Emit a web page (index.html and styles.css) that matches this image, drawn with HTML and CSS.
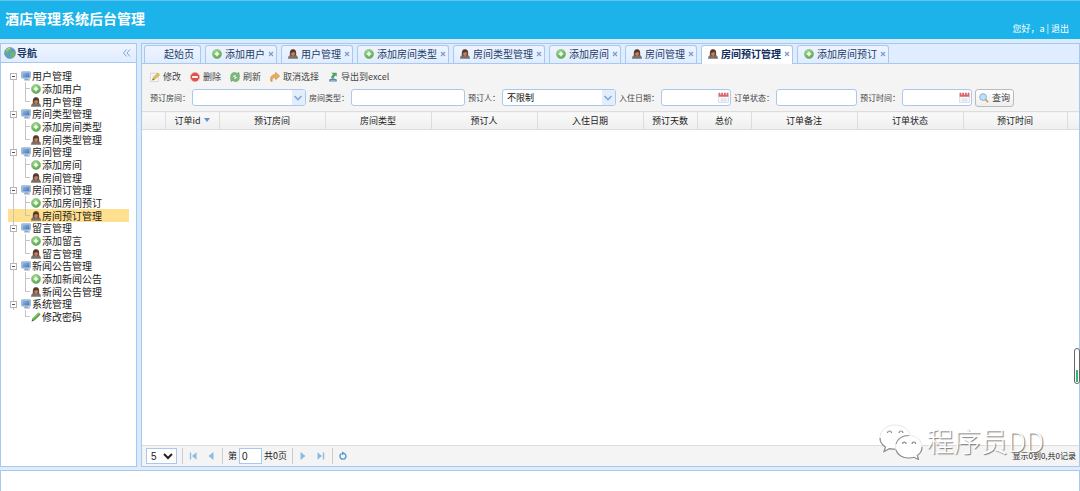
FILE: index.html
```html
<!DOCTYPE html>
<html lang="zh-CN">
<head>
<meta charset="utf-8">
<title>酒店管理系统后台管理</title>
<link rel="stylesheet" href="styles.css">
</head>
<body>
<svg width="0" height="0" class="sprite" aria-hidden="true">
  <defs>
    <radialGradient id="g-green" cx=".4" cy=".3" r=".8"><stop offset="0" stop-color="#a5dc92"/><stop offset="1" stop-color="#4da041"/></radialGradient>
    <linearGradient id="g-blue" x1="0" y1="0" x2="1" y2="1"><stop offset="0" stop-color="#93b9e6"/><stop offset="1" stop-color="#3f76bd"/></linearGradient>
    <symbol id="i-add" viewBox="0 0 16 16"><circle cx="8" cy="8" r="7.400" fill="url(#g-green)" stroke="#7db873" stroke-width=".8"/><path d="M8 4.500v7M4.500 8h7" stroke="#fff" stroke-width="2.200"/></symbol>
    <symbol id="i-user" viewBox="0 0 16 16"><path d="M0 15.500c0-4 2-5.500 4.500-6h7c2.500.5 4.500 2 4.500 6z" fill="#70746c"/><path d="M5.500 10h5L8 14z" fill="#c9584a"/><path d="M3 9C2.500 3 4 .5 8 .5s5.500 2.500 5 8.500L11 11H5z" fill="#674331"/><ellipse cx="8" cy="7.500" rx="3" ry="3.700" fill="#b98261"/><path d="M4.500 6c2 0 4-.8 5-2l2 2V3L8 1 5 3z" fill="#553526"/></symbol>
    <symbol id="i-pc" viewBox="0 0 16 16"><rect x=".8" y="1" width="14.400" height="10.500" rx="1" fill="#b2c6df" stroke="#84a3c8"/><rect x="2.500" y="2.500" width="11" height="7.500" fill="url(#g-blue)"/><path d="M6 11.500h5V13h3v2H5v-2h1z" fill="#93a9c5"/></symbol>
    <symbol id="i-pen" viewBox="0 0 16 16"><path d="M1 15l1.500-5L12 .5l3.500 3.500L6 13z" fill="#58a744"/><path d="M3 11L12.500 2" stroke="#a0d68d" stroke-width="1.500"/><path d="M1 15l1-3 2 2z" fill="#444"/></symbol>
    <symbol id="i-edit" viewBox="0 0 16 16"><path d="M1 2h12v13H1z" fill="#fff" stroke="#b3bdcd"/><path d="M3 5h6M3 8h4" stroke="#cbd4e0"/><path d="M4 13l1-4 7.500-7.500 3 3L8 12z" fill="#e7bb53" stroke="#c4903b" stroke-width=".7"/><path d="M4 13l.7-2.500L6.500 12z" fill="#554"/></symbol>
    <symbol id="i-del" viewBox="0 0 16 16"><circle cx="8" cy="8" r="7.200" fill="#de5048" stroke="#e99b90"/><path d="M3.500 8h9" stroke="#fff" stroke-width="3"/></symbol>
    <symbol id="i-reload" viewBox="0 0 16 16"><path d="M1 7c0-6 7-8 10.500-4.500L14 .5l1.500 7-7-.3L10.500 5C8 3.500 5 5 4.500 7.500zM15 9c0 6-7 8-10.500 4.500L2 15.500.5 8.500l7 .3L5.500 11c2.500 1.500 5.500 0 6-2.500z" fill="#79be79" stroke="#469050" stroke-width=".7"/></symbol>
    <symbol id="i-redo" viewBox="0 0 16 16"><path d="M1.500 15C-.5 8 3 4 9 4V.5l6.500 6L9 12.500V9C5 8.500 3 10 3.500 15z" fill="#f0ad57" stroke="#b97832" stroke-width=".8"/></symbol>
    <symbol id="i-export" viewBox="0 0 16 16"><path d="M5 1h9v6l-2.500-1.500L8 11 4.500 8.500 8 3.500z" fill="#4ba66a"/><path d="M2 12c4-2 8-2 12 0v3H2z" fill="#5686a5"/><path d="M4 13.500h8" stroke="#b9d2df"/></symbol>
    <symbol id="i-globe" viewBox="0 0 16 16"><circle cx="8" cy="8" r="7.400" fill="#5c9bd1" stroke="#678fae" stroke-width=".7"/><path d="M2 4c3-4 7-3 8-2l-1 3-3 1-1 3-3-1zM8 8l5-2 2 3-3 5-4 1 1-3z" fill="#72b85c"/><path d="M3 5c1-2 3-3 5-3" fill="none" stroke="#d2ecd0"/></symbol>
    <symbol id="i-find" viewBox="0 0 16 16"><path d="M9.500 9.500l5 5" stroke="#d89b57" stroke-width="3"/><circle cx="6.500" cy="6.500" r="5.400" fill="#bfe0fa" stroke="#8eb2d7" stroke-width="1.600"/></symbol>
    <symbol id="i-cal" viewBox="0 0 16 16"><path d="M1 2h14v13H1z" fill="#fff" stroke="#bcc9dc"/><path d="M1 1h14v6H1z" fill="#dc646a"/><path d="M4 0v4M8 0v4M12 0v4" stroke="#fff" stroke-width="1.300"/><path d="M3 10h10M3 12.500h10M6 8v6M10 8v6" stroke="#d1dbea"/></symbol>
    <symbol id="i-down" viewBox="0 0 10 10"><path d="M1.500 3l3.500 3.500L8.500 3" fill="none" stroke="#80a9db" stroke-width="1.600"/></symbol>
    <symbol id="i-x" viewBox="0 0 6 6"><path d="M1 1l4 4M5 1L1 5" stroke="#7f9cc6" stroke-width="1.200"/></symbol>
    <symbol id="i-prev" viewBox="0 0 8 8"><path d="M6.500 0v8L1.500 4z" fill="#8bbbe0"/></symbol>
    <symbol id="i-first" viewBox="0 0 8 8"><path d="M1.500.5v7" stroke="#8bbbe0" stroke-width="1.400"/><path d="M7.500.3v7.400L3 4z" fill="#8bbbe0"/></symbol>
  </defs>
</svg>

<header class="banner">
  <h1 class="banner-title">酒店管理系统后台管理</h1>
  <div class="banner-user">您好，a | <a href="#">退出</a></div>
</header>

<div class="workspace">
  <aside class="nav-panel">
    <div class="nav-head"><svg class="globe"><use href="#i-globe"/></svg><h2>导航</h2><button class="collapse" aria-label="收起"><svg viewBox="0 0 8 8"><path d="M4 .5L1 4l3 3.500M7.500.5l-3 3.500 3 3.500" fill="none" stroke="#7da5dd"/></svg></button></div>
    <ul class="tree">
      <li><a class="branch" href="#"><i class="toggle"></i><svg><use href="#i-pc"/></svg>用户管理</a>
        <ul><li><a class="leaf" href="#"><svg><use href="#i-add"/></svg>添加用户</a></li><li><a class="leaf" href="#"><svg><use href="#i-user"/></svg>用户管理</a></li></ul></li>
      <li><a class="branch" href="#"><i class="toggle"></i><svg><use href="#i-pc"/></svg>房间类型管理</a>
        <ul><li><a class="leaf" href="#"><svg><use href="#i-add"/></svg>添加房间类型</a></li><li><a class="leaf" href="#"><svg><use href="#i-user"/></svg>房间类型管理</a></li></ul></li>
      <li><a class="branch" href="#"><i class="toggle"></i><svg><use href="#i-pc"/></svg>房间管理</a>
        <ul><li><a class="leaf" href="#"><svg><use href="#i-add"/></svg>添加房间</a></li><li><a class="leaf" href="#"><svg><use href="#i-user"/></svg>房间管理</a></li></ul></li>
      <li><a class="branch" href="#"><i class="toggle"></i><svg><use href="#i-pc"/></svg>房间预订管理</a>
        <ul><li><a class="leaf" href="#"><svg><use href="#i-add"/></svg>添加房间预订</a></li><li><a class="leaf selected" href="#"><svg><use href="#i-user"/></svg>房间预订管理</a></li></ul></li>
      <li><a class="branch" href="#"><i class="toggle"></i><svg><use href="#i-pc"/></svg>留言管理</a>
        <ul><li><a class="leaf" href="#"><svg><use href="#i-add"/></svg>添加留言</a></li><li><a class="leaf" href="#"><svg><use href="#i-user"/></svg>留言管理</a></li></ul></li>
      <li><a class="branch" href="#"><i class="toggle"></i><svg><use href="#i-pc"/></svg>新闻公告管理</a>
        <ul><li><a class="leaf" href="#"><svg><use href="#i-add"/></svg>添加新闻公告</a></li><li><a class="leaf" href="#"><svg><use href="#i-user"/></svg>新闻公告管理</a></li></ul></li>
      <li><a class="branch" href="#"><i class="toggle"></i><svg><use href="#i-pc"/></svg>系统管理</a>
        <ul><li><a class="leaf" href="#"><svg><use href="#i-pen"/></svg>修改密码</a></li></ul></li>
    </ul>
  </aside>

  <main class="content">
    <nav class="tabs">
      <button class="tab home">起始页</button>
      <button class="tab"><svg><use href="#i-add"/></svg>添加用户<svg class="x"><use href="#i-x"/></svg></button>
      <button class="tab"><svg><use href="#i-user"/></svg>用户管理<svg class="x"><use href="#i-x"/></svg></button>
      <button class="tab"><svg><use href="#i-add"/></svg>添加房间类型<svg class="x"><use href="#i-x"/></svg></button>
      <button class="tab"><svg><use href="#i-user"/></svg>房间类型管理<svg class="x"><use href="#i-x"/></svg></button>
      <button class="tab"><svg><use href="#i-add"/></svg>添加房间<svg class="x"><use href="#i-x"/></svg></button>
      <button class="tab"><svg><use href="#i-user"/></svg>房间管理<svg class="x"><use href="#i-x"/></svg></button>
      <button class="tab active"><svg><use href="#i-user"/></svg>房间预订管理<svg class="x"><use href="#i-x"/></svg></button>
      <button class="tab"><svg><use href="#i-add"/></svg>添加房间预订<svg class="x"><use href="#i-x"/></svg></button>
    </nav>

    <div class="toolbar">
      <div class="actions">
        <button><svg><use href="#i-edit"/></svg>修改</button>
        <button><svg><use href="#i-del"/></svg>删除</button>
        <button><svg><use href="#i-reload"/></svg>刷新</button>
        <button><svg><use href="#i-redo"/></svg>取消选择</button>
        <button><svg><use href="#i-export"/></svg>导出到excel</button>
      </div>
      <form class="search">
        <div class="field"><label for="room">预订房间：</label><div class="box wide"><input id="room" type="text"><span class="arrow"><svg><use href="#i-down"/></svg></span></div></div>
        <div class="field"><label for="type">房间类型：</label><div class="box wide"><input id="type" type="text"></div></div>
        <div class="field"><label class="short" for="guest">预订人：</label><div class="box wide"><select id="guest"><option>不限制</option></select><span class="arrow"><svg><use href="#i-down"/></svg></span></div></div>
        <div class="field"><label for="checkin">入住日期：</label><div class="box date"><input id="checkin" type="text"><svg class="cal"><use href="#i-cal"/></svg></div></div>
        <div class="field"><label for="state">订单状态：</label><div class="box medium"><input id="state" type="text"></div></div>
        <div class="field"><label for="time">预订时间：</label><div class="box date"><input id="time" type="text"><svg class="cal"><use href="#i-cal"/></svg></div></div>
        <button class="find" type="button"><svg><use href="#i-find"/></svg>查询</button>
      </form>
    </div>

    <div class="grid-view">
      <table>
        <colgroup><col class="c-check"><col class="c-small"><col class="c-big"><col class="c-big"><col class="c-big"><col class="c-big"><col class="c-small"><col class="c-small"><col class="c-big"><col class="c-big"><col class="c-last"><col></colgroup>
        <thead><tr><th></th><th>订单id<svg class="sort" viewBox="0 0 6 4"><path d="M0 0h6L3 4z" fill="#5d93cf"/></svg></th><th>预订房间</th><th>房间类型</th><th>预订人</th><th>入住日期</th><th>预订天数</th><th>总价</th><th>订单备注</th><th>订单状态</th><th>预订时间</th><th></th></tr></thead>
        <tbody></tbody>
      </table>
    </div>

    <footer class="pager">
      <select class="size" aria-label="每页记录数"><option>5</option></select>
      <div class="steps"><button aria-label="首页"><svg><use href="#i-first"/></svg></button><button aria-label="上一页"><svg><use href="#i-prev"/></svg></button></div>
      <div class="page"><label for="page">第</label><input id="page" type="text" value="0"><span>共0页</span></div>
      <div class="steps"><button class="flip" aria-label="下一页"><svg><use href="#i-prev"/></svg></button><button class="flip" aria-label="末页"><svg><use href="#i-first"/></svg></button></div>
      <div class="steps"><button aria-label="刷新"><svg viewBox="0 0 8 8"><path d="M5 1.300A3 3 0 1 1 2.500 1.500" fill="none" stroke="#4d97ce" stroke-width="1.400"/><path d="M3-.5l3 1.800-3 2z" fill="#4d97ce"/></svg></button></div>
      <span class="total">显示0到0,共0记录</span>
    </footer>
  </main>
</div>

<section class="bottom-panel"></section>

<div class="gauge"><i></i></div>
<div class="watermark">
  <svg viewBox="0 0 44 36"><g fill="#fff" stroke="#dcdcdc" stroke-width=".7"><path d="M16 1C7.500 1 1 6.500 1 13.500c0 4 2 7.300 5.500 9.500L5 27.500l5.500-2.800c2 .6 4 .8 6.500.7C31 24 33 14 30 8 27.500 3.500 22 1 16 1z"/><path d="M30 11.500c-7.500 0-13.500 5-13.500 11.500S22.500 34 30 34c1.700 0 3.500-.2 5-.7l4.500 2.200-1.200-4C41.500 29.500 43 26.500 43 23c0-6.500-5.500-11.500-13-11.500z"/></g><g fill="none" stroke="#8f8f8f" stroke-width="1.200"><path d="M1 14c0 4 2 7 5.500 9L5 27.500l5.500-2.800 6 .6M17 26c1.500 5 7 8.300 13 8 2 0 3.500-.2 5-.7l4.500 2.200-1.200-4C41.500 29.500 43 26.500 43 23M17 20c1-5 6-8.500 13-8.500M8.500 9a2 2 0 0 1 4 0M20 9a2 2 0 0 1 4 0M23.500 20a1.800 1.800 0 0 1 3.600 0M33 20a1.800 1.800 0 0 1 3.600 0"/></g></svg>
  <span>程序员DD</span>
</div>
</body>
</html>
```

FILE: styles.css
```css
* { box-sizing: border-box; }

body {
  margin: 0;
  min-height: 100vh;
  display: flex;
  flex-direction: column;
  background: #e0ecfb;
  color: #222;
  font: 10px/12px "Noto Sans CJK SC", sans-serif;
  position: relative;
  overflow: hidden;
}

a { color: inherit; text-decoration: none; }
ul { list-style: none; margin: 0; padding: 0; }
h1, h2 { margin: 0; }
button, input, select { font: inherit; color: inherit; margin: 0; }
button { background: none; border: 0; padding: 0; white-space: nowrap; }
svg { display: block; flex: none; width: 10px; height: 10px; }
.sprite { position: absolute; width: 0; height: 0; }

/* Banner */
.banner {
  display: flex;
  justify-content: space-between;
  height: 39px;
  padding: 0 11px 0 5px;
  background: #1bb3e9;
  border-top: 1px solid #62c5f0;
  color: #fff;
}
.banner-title { font-size: 14px; line-height: 34px; font-weight: 700; }
.banner-user { align-self: flex-end; font-size: 9px; line-height: 12px; padding-bottom: 4px; }

/* Workspace */
.workspace {
  flex: 1;
  display: flex;
  gap: 4px;
  padding-top: 4px;
  background: #d9eafa;
}
.nav-panel {
  flex: none;
  width: 137px;
  border: 1px solid #a9c8ee;
  background: #fff;
}
.nav-head {
  display: flex;
  align-items: center;
  height: 19px;
  padding: 0 5px 0 3px;
  background: linear-gradient(#eff5ff, #e0ecff);
  border-bottom: 1px solid #a9c8ee;
  color: #18385f;
}
.nav-head h2 { flex: 1; font-size: 10px; line-height: 12px; font-weight: 700; padding-left: 1px; }
.globe { width: 12px; height: 12px; }
.collapse svg { width: 9px; height: 8px; }

/* Tree */
.tree { padding: 7px 7px 0; }
.tree a { display: flex; align-items: center; gap: 1px; color: #222; }
.branch { height: 12px; background: linear-gradient(#c4c4c4, #c4c4c4) 5px 0 / 1px 100% no-repeat; }
.branch svg { margin-left: 3px; }
.tree > li:first-child > .branch { background-position: 5px 8px; }
.toggle {
  width: 7px;
  height: 7px;
  margin-left: 2px;
  border: 1px solid #b5b5b5;
  background: linear-gradient(#555, #555) center / 3px 1px no-repeat #fff;
}
.leaf {
  height: 13px;
  padding-left: 23px;
  background:
    linear-gradient(#c4c4c4, #c4c4c4) 5px 0 / 1px 100% no-repeat,
    linear-gradient(#c4c4c4, #c4c4c4) 17px 0 / 1px 100% no-repeat,
    linear-gradient(#c4c4c4, #c4c4c4) 17px 6px / 5px 1px no-repeat;
}
li:last-child > .leaf { background-size: 1px 100%, 1px 7px, 5px 1px; }
.tree > li:last-child .leaf { background-size: 0 0, 1px 7px, 5px 1px; }
.leaf.selected { background-color: #ffe08f; }

/* Content and tabs */
.content {
  flex: 1;
  min-width: 0;
  display: flex;
  flex-direction: column;
  border: 1px solid #a9c8ee;
  background: #fff;
}
.tabs {
  display: flex;
  align-items: flex-end;
  gap: 4px;
  height: 20px;
  padding: 0 2px;
  background: #e0ecff;
  border-bottom: 1px solid #a9c8ee;
}
.tab {
  display: flex;
  align-items: center;
  gap: 3px;
  height: 18px;
  padding: 0 2px 1px 6px;
  border: 1px solid #a9c8ee;
  border-bottom: 0;
  border-radius: 3px 3px 0 0;
  background: linear-gradient(#eff5ff, #e0ecff);
  color: #1c3d69;
}
.tab.home { padding: 0 6px 1px 19px; }
.tab.active { height: 19px; margin-bottom: -1px; padding-bottom: 2px; background: #fff; color: #0e2d5f; font-weight: 700; }
.tab .x { width: 6px; height: 6px; }

/* Toolbar */
.toolbar { padding: 0 8px; background: #f4f4f4; color: #444; }
.actions { display: flex; gap: 9px; height: 25px; align-items: center; font-size: 9px; }
.actions button { display: flex; align-items: center; gap: 3px; }
.search { display: flex; gap: 3px; height: 22px; align-items: flex-start; }
.field { display: flex; align-items: center; }
.field label { width: 42px; font-size: 8px; white-space: nowrap; }
.field label.short { width: 34px; }
.box {
  display: flex;
  align-items: center;
  height: 17px;
  border: 1px solid #a9c8ee;
  border-radius: 3px;
  background: #fff;
  overflow: hidden;
}
.wide { width: 114px; }
.medium { width: 81px; }
.date { width: 70px; padding-right: 1px; }
.box input, .box select {
  flex: 1;
  min-width: 0;
  height: 15px;
  padding: 0 4px;
  border: 0;
  outline: 0;
  appearance: none;
  background: none;
  font-size: 9px;
  color: #111;
}
.arrow { display: flex; align-items: center; width: 13px; height: 15px; padding-left: 1px; background: #e3eefd; }
.cal { width: 11px; height: 11px; }
.find {
  display: flex;
  align-items: center;
  gap: 3px;
  height: 18px;
  padding: 0 3px;
  border: 1px solid #bbb;
  border-radius: 3px;
  background: linear-gradient(#fff, #eee);
  font-size: 9px;
}

/* Grid */
.grid-view { flex: 1; }
table { width: 100%; table-layout: fixed; border-collapse: collapse; }
.c-check { width: 23px; }
.c-small { width: 54px; }
.c-big { width: 106px; }
.c-last { width: 104px; }
th {
  height: 18px;
  padding: 0;
  border: 1px solid #ddd;
  border-width: 1px 1px 1px 0;
  background: linear-gradient(#f9f9f9, #efefef);
  font-size: 9px;
  font-weight: 400;
  white-space: nowrap;
}
th:last-child { border-right: 0; }
.sort { display: inline-block; width: 6px; height: 4px; margin-left: 3px; vertical-align: 2px; }

/* Pager */
.pager {
  display: flex;
  align-items: center;
  height: 21px;
  padding: 0 3px 0 4px;
  background: #f4f4f4;
  border-top: 1px solid #ddd;
  font-size: 8px;
}
.size { width: 31px; height: 16px; border: 1px solid #a9c8ee; background: #fff; font: 10px "Liberation Sans", sans-serif; margin-right: 5px; }
.steps { display: flex; align-items: center; gap: 10px; height: 16px; padding: 0 7px 0 6px; border-left: 1px solid #ccc; }
.steps svg { width: 8px; height: 8px; overflow: visible; }
.flip { transform: scaleX(-1); }
.page { display: flex; align-items: center; gap: 2px; height: 16px; padding: 0 5px; border-left: 1px solid #ccc; font-size: 9px; }
.page input { width: 23px; height: 16px; padding: 0 2px; border: 1px solid #a9c8ee; font: 10px "Liberation Sans", sans-serif; }
.total { margin-left: auto; }

/* Bottom region */
.bottom-panel { height: 21px; margin-top: 3px; border: 1px solid #a9c8ee; border-bottom: 0; background: #fff; }

/* Overlays */
.gauge {
  position: absolute;
  right: 0;
  top: 348px;
  width: 6px;
  height: 36px;
  padding: 1px;
  display: flex;
  align-items: flex-end;
  border: 1px solid #666;
  border-radius: 3px;
  background: #fff;
}
.gauge i { width: 100%; height: 12px; background: #35b573; }
.watermark {
  position: absolute;
  right: 36px;
  bottom: 31px;
  display: flex;
  align-items: center;
  gap: 4px;
  pointer-events: none;
}
.watermark svg { width: 44px; height: 36px; }
.watermark span {
  color: #fff;
  font-size: 27px;
  font-weight: 300;
  line-height: 34px;
  padding-bottom: 2px;
  text-shadow: 1px 1px 1px #777;
}
```
